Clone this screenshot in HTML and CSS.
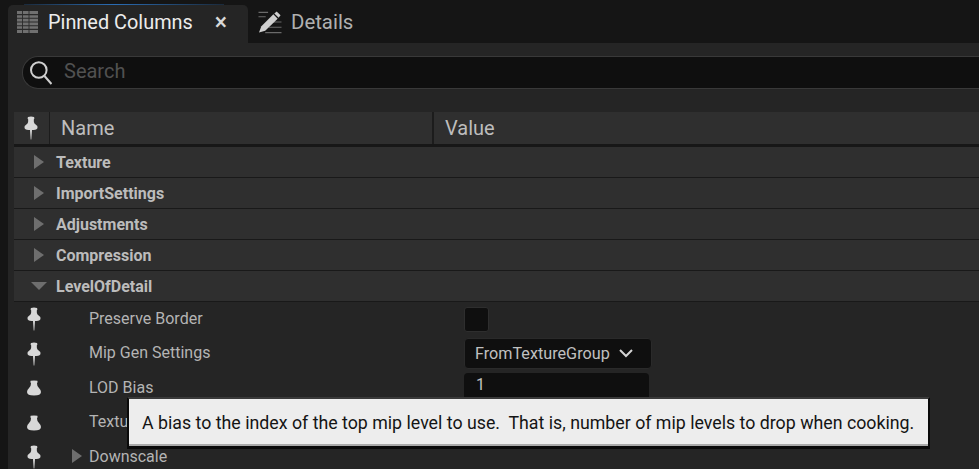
FILE: index.html
```html
<!DOCTYPE html>
<html lang="en">
<head>
<meta charset="utf-8">
<title>Pinned Columns</title>
<link rel="stylesheet" href="styles.css">
</head>
<body>
<svg class="defs" width="0" height="0" aria-hidden="true">
  <symbol id="pin" viewBox="0 0 14 24">
    <path d="M4 1Q7 0 10 1Q11 2 9.8 3.5Q9.6 6 10.5 7.5Q13.5 9.5 13.5 11.5Q13.5 13.5 9.5 14H8L7.3 23.5H6.7L6 14H4.5Q.5 13.5 .5 11.5Q.5 9.5 3.5 7.5Q4.4 6 4.2 3.5Q3 2 4 1Z" fill="currentColor"/>
  </symbol>
  <symbol id="pin-short" viewBox="0 0 14 16">
    <path d="M3.6 .8Q7 0 10.4 .8Q11 2 10 3.4Q10 5.5 11.6 7.5Q14 10 14 12Q14 15.5 7 15.5Q0 15.5 0 12Q0 10 2.4 7.5Q4 5.5 4 3.4Q3 2 3.6 .8Z" fill="currentColor"/>
  </symbol>
</svg>
<div class="tabbar">
  <div class="tab active">
    <svg class="tab-icon" viewBox="0 0 21 22"><path d="M0 0H21V22H0Z" fill="#707070"/><path d="M0 3.6H21M0 7.3H21M0 11H21M0 14.7H21M0 18.4H21" stroke="#2a2a2a" stroke-width="1.1"/><path d="M5.5 0V22M12 0V22" stroke="#2a2a2a" stroke-width=".9"/></svg>
    <span class="tab-label">Pinned Columns</span>
    <span class="tab-close">×</span>
  </div>
  <div class="tab">
    <svg class="tab-icon pencil" viewBox="0 0 24 24"><path d="M0 1.5H10M0 6H7.5M14 11.5H24M11 17H24M7 22.5H24" stroke="#6a6a6a" stroke-width="1.2" fill="none"/><path d="M.5 22.5L3 16L15.5 3.5L20 8L7 20.5Z" fill="#cfcfcf"/><path d="M16.5 2.5L19 .5L23 4.5L21 7Z" fill="#cfcfcf"/></svg>
    <span class="tab-label dim">Details</span>
  </div>
</div>
<main class="panel">
  <div class="search">
    <svg class="search-icon" viewBox="0 0 22 24"><circle cx="8.8" cy="9" r="7.8" fill="none" stroke="#cfcfcf" stroke-width="2"/><path d="M14.5 15L21.5 23" stroke="#cfcfcf" stroke-width="2"/></svg>
    <span class="search-text">Search</span>
  </div>
  <div class="header">
    <div class="head-pin"><svg class="pin"><use href="#pin"/></svg></div>
    <div class="head-name">Name</div>
    <div class="head-value">Value</div>
  </div>
  <div class="category"><i class="arrow"></i>Texture</div>
  <div class="category"><i class="arrow"></i>ImportSettings</div>
  <div class="category"><i class="arrow"></i>Adjustments</div>
  <div class="category"><i class="arrow"></i>Compression</div>
  <div class="category"><i class="arrow down"></i>LevelOfDetail</div>
  <div class="prop">
    <div class="prop-pin"><svg class="pin"><use href="#pin"/></svg></div>
    <div class="prop-name">Preserve Border</div>
    <div class="prop-value"><span class="check"></span></div>
  </div>
  <div class="prop">
    <div class="prop-pin"><svg class="pin"><use href="#pin"/></svg></div>
    <div class="prop-name">Mip Gen Settings</div>
    <div class="prop-value"><span class="combo">FromTextureGroup<svg class="chev" viewBox="0 0 14 9"><path d="M1 1L7 7L13 1" fill="none" stroke="#d4d4d4" stroke-width="2"/></svg></span></div>
  </div>
  <div class="prop">
    <div class="prop-pin"><svg class="pin short"><use href="#pin-short"/></svg></div>
    <div class="prop-name">LOD Bias</div>
    <div class="prop-value"><span class="input">1</span></div>
  </div>
  <div class="prop">
    <div class="prop-pin"><svg class="pin short"><use href="#pin-short"/></svg></div>
    <div class="prop-name">Texture Group</div>
    <div class="prop-value"></div>
  </div>
  <div class="prop">
    <div class="prop-pin"><svg class="pin"><use href="#pin"/></svg></div>
    <div class="prop-name"><i class="arrow nested"></i>Downscale</div>
    <div class="prop-value"></div>
  </div>
</main>
<div class="tooltip">A bias to the index of the top mip level to use.&nbsp; That is, number of mip levels to drop when cooking.</div>
</body>
</html>
```
FILE: styles.css
```css
* { box-sizing: border-box; }
html, body { margin: 0; height: 100%; }
body { width: 979px; height: 469px; overflow: hidden; background: #151515; font-family: Roboto, sans-serif; color: #c4c4c4; position: relative; }
.defs { position: absolute; }
.tabbar { height: 43px; display: flex; padding: 5px 0 0 8px; }
.tab { display: flex; align-items: center; height: 38px; padding-bottom: 4px; }
.tab.active { width: 240px; background: #252525; border-radius: 5px 5px 0 0; padding-left: 9px; position: relative; }
.tab.active::before { content: ""; position: absolute; left: 16px; right: 24px; top: -1px; height: 1px; background: linear-gradient(90deg, #1a2a3c, #2a6cb4 45%, #1a2a3c); }
.tab:not(.active) { padding-left: 10px; }
.tab-icon { width: 21px; height: 22px; flex: none; }
.pencil { width: 24px; height: 23px; }
.tab-label { font-size: 19.9px; color: #ececec; margin-left: 10px; }
.tab-label.dim { font-size: 20.4px; color: #b0b0b0; margin-left: 9px; }
.tab-close { font-size: 23px; font-weight: 500; color: #d8d8d8; margin-left: 22px; line-height: 1; }
.panel { margin-left: 8px; height: 426px; background: #252525; padding: 13px 0 0 6px; overflow: hidden; }
.search { height: 33px; margin-left: 8px; margin-right: -8px; background: #0f0f0f; border: 1px solid #393939; border-right: 0; border-radius: 16px 0 0 16px; display: flex; align-items: center; padding-left: 7px; }
.search-icon { width: 22px; height: 24px; }
.search-text { font-size: 20px; color: #515151; margin-left: 12px; margin-top: -4px; }
.header { height: 35px; margin-top: 23px; display: flex; background: #2f2f2f; border-bottom: 3px solid #171717; }
.head-pin { width: 36px; display: flex; align-items: center; justify-content: center; padding-right: 2px; }
.head-pin, .head-name { border-right: 1px solid #1c1c1c; }
.head-name { width: 384px; padding-left: 11px; font-size: 20px; line-height: 32px; border-right-width: 2px; color: #bdbdbd; }
.head-value { padding-left: 11px; font-size: 20px; line-height: 32px; color: #bdbdbd; }
.pin { width: 14px; height: 24px; color: #d8d8d8; display: block; }
.pin.short { height: 16px; }
.category { height: 31px; background: #2f2f2f; border-bottom: 1px solid #191919; display: flex; align-items: center; font-size: 16px; font-weight: 700; color: #bcbcbc; padding-left: 20px; }
.arrow { width: 0; height: 0; border-style: solid; border-width: 7.5px 0 7.5px 10px; border-color: transparent transparent transparent #6e6e6e; margin-right: 12px; }
.arrow.down { border-width: 8px 8px 0; border-color: #6e6e6e transparent transparent; margin-left: -3px; margin-right: 9px; }
.prop { height: 34.5px; display: flex; align-items: center; }
.prop-pin { width: 39px; display: flex; justify-content: center; }
.prop-name { width: 411px; padding: 0 0 2px 36px; font-size: 16px; color: #b4b4b4; display: flex; align-items: center; position: relative; }
.arrow.nested { position: absolute; left: 19px; }
.prop-value { display: flex; }
.check { width: 25px; height: 25px; background: #0f0f0f; border: 1px solid #2e2e2e; border-radius: 3px; }
.combo { height: 31px; width: 188px; background: #0f0f0f; border: 1px solid #2a2a2a; border-radius: 4px; display: flex; align-items: center; padding-left: 10px; font-size: 16.2px; color: #c0c0c0; }
.chev { width: 14px; height: 9px; margin-left: 9px; }
.input { height: 30px; width: 185px; background: #0f0f0f; border-radius: 4px; padding: 2px 0 0 12px; font-size: 16px; color: #c0c0c0; }
.tooltip { position: absolute; left: 127px; top: 397px; width: 803px; height: 52px; background: #ededed; border: 2px solid #0a0a0a; border-top-color: #3a3a3a; border-bottom: 3px solid #0a0a0a; box-shadow: inset 0 -2px 0 #aaa; color: #141414; font-size: 17.78px; padding-left: 13px; line-height: 48px; white-space: nowrap; }
```
